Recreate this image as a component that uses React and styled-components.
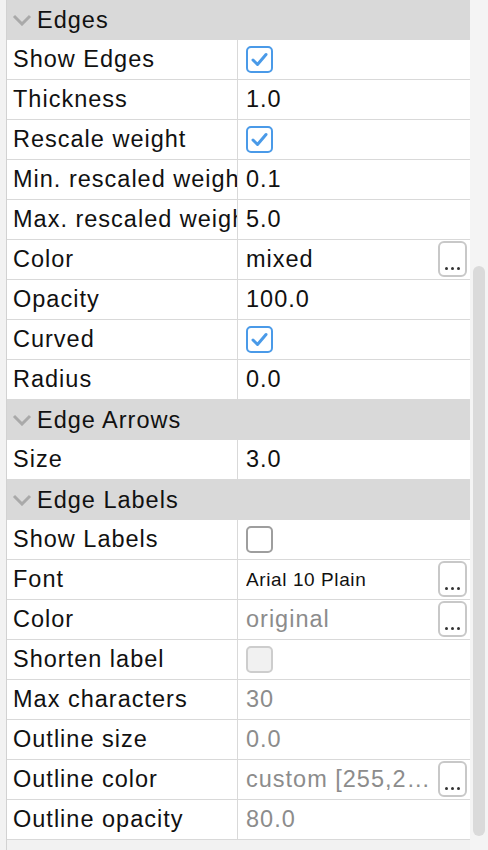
import React from "react";
import styled, { createGlobalStyle } from "styled-components";

const Global = createGlobalStyle`
  html, body { margin: 0; padding: 0; background: #f2f2f2; }
  body { font-family: "Liberation Sans", Arial, Helvetica, sans-serif; }
`;

const Page = styled.div`
  display: flex;
  width: 488px;
  height: 850px;
  overflow: hidden;
  background: #f2f2f2;
`;

const Gutter = styled.div`
  width: 6px;
  border-right: 1px solid #d2d2d2;
  background: #f2f2f2;
`;

const Table = styled.div`
  width: 463px;
  display: flex;
  flex-direction: column;
`;

const Header = styled.div`
  height: 40px;
  background: #d9d9d9;
  display: flex;
  align-items: center;
  gap: 5px;
  padding-left: 5px;
  font-size: 23.5px;
  letter-spacing: 1px;
  color: #111;
`;

const Row = styled.div`
  height: 39px;
  border-bottom: 1px solid #d9d9d9;
  background: #fff;
  display: grid;
  grid-template-columns: 231px 1fr;
`;

const Label = styled.div`
  border-right: 1px solid #d9d9d9;
  padding-left: 6px;
  font-size: 23.5px;
  letter-spacing: 1px;
  line-height: 39px;
  color: #111;
  white-space: nowrap;
  overflow: hidden;
`;

const Cell = styled.div`
  display: flex;
  align-items: center;
  padding-left: 8px;
  padding-right: 3px;
  min-width: 0;
`;

const Value = styled.span`
  flex: 1;
  min-width: 0;
  font-size: ${(p) => (p.small ? "19px" : "23.5px")};
  letter-spacing: ${(p) => (p.small ? "0.6px" : "1px")};
  line-height: 39px;
  color: ${(p) => (p.dim ? "#8c8c8c" : "#111")};
  white-space: nowrap;
  overflow: hidden;
  text-overflow: ellipsis;
`;

const Box = styled.div`
  width: 23px;
  height: 23px;
  border-radius: 5px;
  border: 2px solid ${(p) => (p.checked ? "#4a9ae8" : p.disabled ? "#cdcdcd" : "#9e9e9e")};
  background: ${(p) => (p.disabled ? "#f1f1f1" : "#fff")};
  display: flex;
  align-items: center;
  justify-content: center;
`;

const Dots = styled.button`
  flex: none;
  width: 29px;
  height: 36px;
  margin-top: -2px;
  margin-left: 4px;
  padding: 0 0 5px;
  border: 2px solid #c8c8c8;
  border-radius: 6px;
  background: #fff;
  display: flex;
  align-items: flex-end;
  justify-content: center;
  gap: 3px;
  box-sizing: border-box;
`;

const Dot = styled.span`
  width: 3px;
  height: 3px;
  border-radius: 50%;
  background: #333;
`;

const Filler = styled.div`
  flex: 1;
  background: #f2f2f2;
`;

const ScrollTrack = styled.div`
  width: 18px;
  background: #f4f4f4;
  padding-top: 266px;
  padding-bottom: 14px;
  display: flex;
  justify-content: center;
  box-sizing: border-box;
`;

const Thumb = styled.div`
  width: 12px;
  height: 100%;
  border-radius: 6px;
  background: #dadada;
`;

const Chevron = () => (
  <svg width="20" height="12" viewBox="0 0 20 12">
    <path d="M2 2 L10 10 L18 2" fill="none" stroke="#a9a9a9" strokeWidth="3" />
  </svg>
);

const Check = ({ checked, disabled }) => (
  <Box checked={checked} disabled={disabled}>
    {checked && (
      <svg width="17" height="15" viewBox="0 0 17 15">
        <path d="M2 8 L6.5 12.5 L15 2.5" fill="none" stroke="#4a9ae8" strokeWidth="3" strokeLinecap="round" strokeLinejoin="round" />
      </svg>
    )}
  </Box>
);

const EllipsisButton = () => (
  <Dots>
    <Dot />
    <Dot />
    <Dot />
  </Dots>
);

const data = [
  { h: "Edges" },
  { l: "Show Edges", c: true },
  { l: "Thickness", v: "1.0" },
  { l: "Rescale weight", c: true },
  { l: "Min. rescaled weight", v: "0.1" },
  { l: "Max. rescaled weight", v: "5.0" },
  { l: "Color", v: "mixed", b: true },
  { l: "Opacity", v: "100.0" },
  { l: "Curved", c: true },
  { l: "Radius", v: "0.0" },
  { h: "Edge Arrows" },
  { l: "Size", v: "3.0" },
  { h: "Edge Labels" },
  { l: "Show Labels", c: false },
  { l: "Font", v: "Arial 10 Plain", b: true, small: true },
  { l: "Color", v: "original", b: true, dim: true },
  { l: "Shorten label", c: false, disabled: true },
  { l: "Max characters", v: "30", dim: true },
  { l: "Outline size", v: "0.0", dim: true },
  { l: "Outline color", v: "custom [255,255,255]", b: true, dim: true },
  { l: "Outline opacity", v: "80.0", dim: true },
];

export default function App() {
  return (
    <>
      <Global />
      <Page>
        <Gutter />
        <Table>
          {data.map((r, i) =>
            r.h ? (
              <Header key={i}>
                <Chevron />
                {r.h}
              </Header>
            ) : (
              <Row key={i}>
                <Label>{r.l}</Label>
                <Cell>
                  {r.c !== undefined ? (
                    <Check checked={r.c} disabled={r.disabled} />
                  ) : (
                    <Value dim={r.dim} small={r.small}>{r.v}</Value>
                  )}
                  {r.b && <EllipsisButton />}
                </Cell>
              </Row>
            )
          )}
          <Filler />
        </Table>
        <ScrollTrack>
          <Thumb />
        </ScrollTrack>
      </Page>
    </>
  );
}
